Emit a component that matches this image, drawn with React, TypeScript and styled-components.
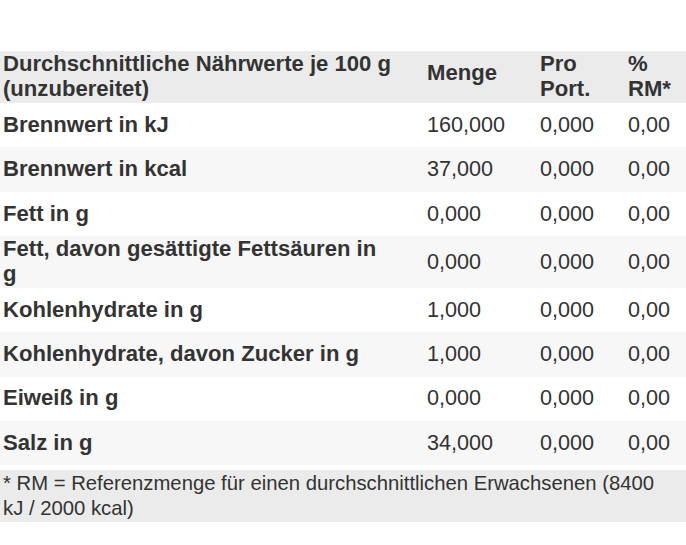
import React from 'react'
import styled, { createGlobalStyle } from 'styled-components'

const GlobalStyle = createGlobalStyle`
  html, body {
    margin: 0;
    padding: 0;
    background: #ffffff;
  }
  body {
    font-family: 'Liberation Sans', Arial, sans-serif;
    color: #333333;
  }
`

const Wrapper = styled.div`
  width: 686px;
  padding-top: 51px;
`

const Table = styled.div`
  display: flex;
  flex-direction: column;
`

type RowVariant = 'head' | 'odd' | 'even'

const rowBackground = (variant: RowVariant) => {
  if (variant === 'head') return '#ebebeb'
  if (variant === 'even') return '#f7f7f7'
  return '#ffffff'
}

const Row = styled.div<{ $variant: RowVariant }>`
  display: grid;
  grid-template-columns: 424px 113px 88px 1fr;
  min-height: ${({ $variant }) => ($variant === 'head' ? '52px' : '44.4px')};
  background-color: ${({ $variant }) => rowBackground($variant)};
`

const Cell = styled.div<{ $bold?: boolean; $top?: boolean; $lift?: boolean }>`
  display: flex;
  align-items: ${({ $top }) => ($top ? 'flex-start' : 'center')};
  padding: ${({ $lift }) => ($lift ? '1px 3px 8px' : '1px 3px')};
  font-size: ${({ $bold }) => ($bold ? '22.1px' : '21.6px')};
  line-height: 24.8px;
  font-weight: ${({ $bold }) => ($bold ? 700 : 400)};
`

const Footer = styled.div`
  margin-top: 5px;
  background-color: #ebebeb;
  padding: 1px 3px;
  font-size: 20.3px;
  line-height: 24.6px;
`

interface Nutrient {
  label: React.ReactNode
  amount: string
  portion: string
  rm: string
}

const rows: Nutrient[] = [
  { label: 'Brennwert in kJ', amount: '160,000', portion: '0,000', rm: '0,00' },
  { label: 'Brennwert in kcal', amount: '37,000', portion: '0,000', rm: '0,00' },
  { label: 'Fett in g', amount: '0,000', portion: '0,000', rm: '0,00' },
  {
    label: (
      <>
        Fett, davon gesättigte Fettsäuren in
        <br />g
      </>
    ),
    amount: '0,000',
    portion: '0,000',
    rm: '0,00',
  },
  { label: 'Kohlenhydrate in g', amount: '1,000', portion: '0,000', rm: '0,00' },
  { label: 'Kohlenhydrate, davon Zucker in g', amount: '1,000', portion: '0,000', rm: '0,00' },
  { label: 'Eiweiß in g', amount: '0,000', portion: '0,000', rm: '0,00' },
  { label: 'Salz in g', amount: '34,000', portion: '0,000', rm: '0,00' },
]

const App = () => {
  return (
    <Wrapper>
      <GlobalStyle />
      <Table>
        <Row $variant="head">
          <Cell $bold $top>
            <span>
              Durchschnittliche Nährwerte je 100 g
              <br />
              (unzubereitet)
            </span>
          </Cell>
          <Cell $bold $lift>
            Menge
          </Cell>
          <Cell $bold $top>
            <span>
              Pro
              <br />
              Port.
            </span>
          </Cell>
          <Cell $bold $top>
            <span>
              %
              <br />
              RM*
            </span>
          </Cell>
        </Row>
        {rows.map((row, i) => (
          <Row key={i} $variant={i % 2 === 0 ? 'odd' : 'even'}>
            <Cell $bold>
              <span>{row.label}</span>
            </Cell>
            <Cell>{row.amount}</Cell>
            <Cell>{row.portion}</Cell>
            <Cell>{row.rm}</Cell>
          </Row>
        ))}
      </Table>
      <Footer>
        * RM = Referenzmenge für einen durchschnittlichen Erwachsenen (8400
        <br />
        kJ / 2000 kcal)
      </Footer>
    </Wrapper>
  )
}

export default App
